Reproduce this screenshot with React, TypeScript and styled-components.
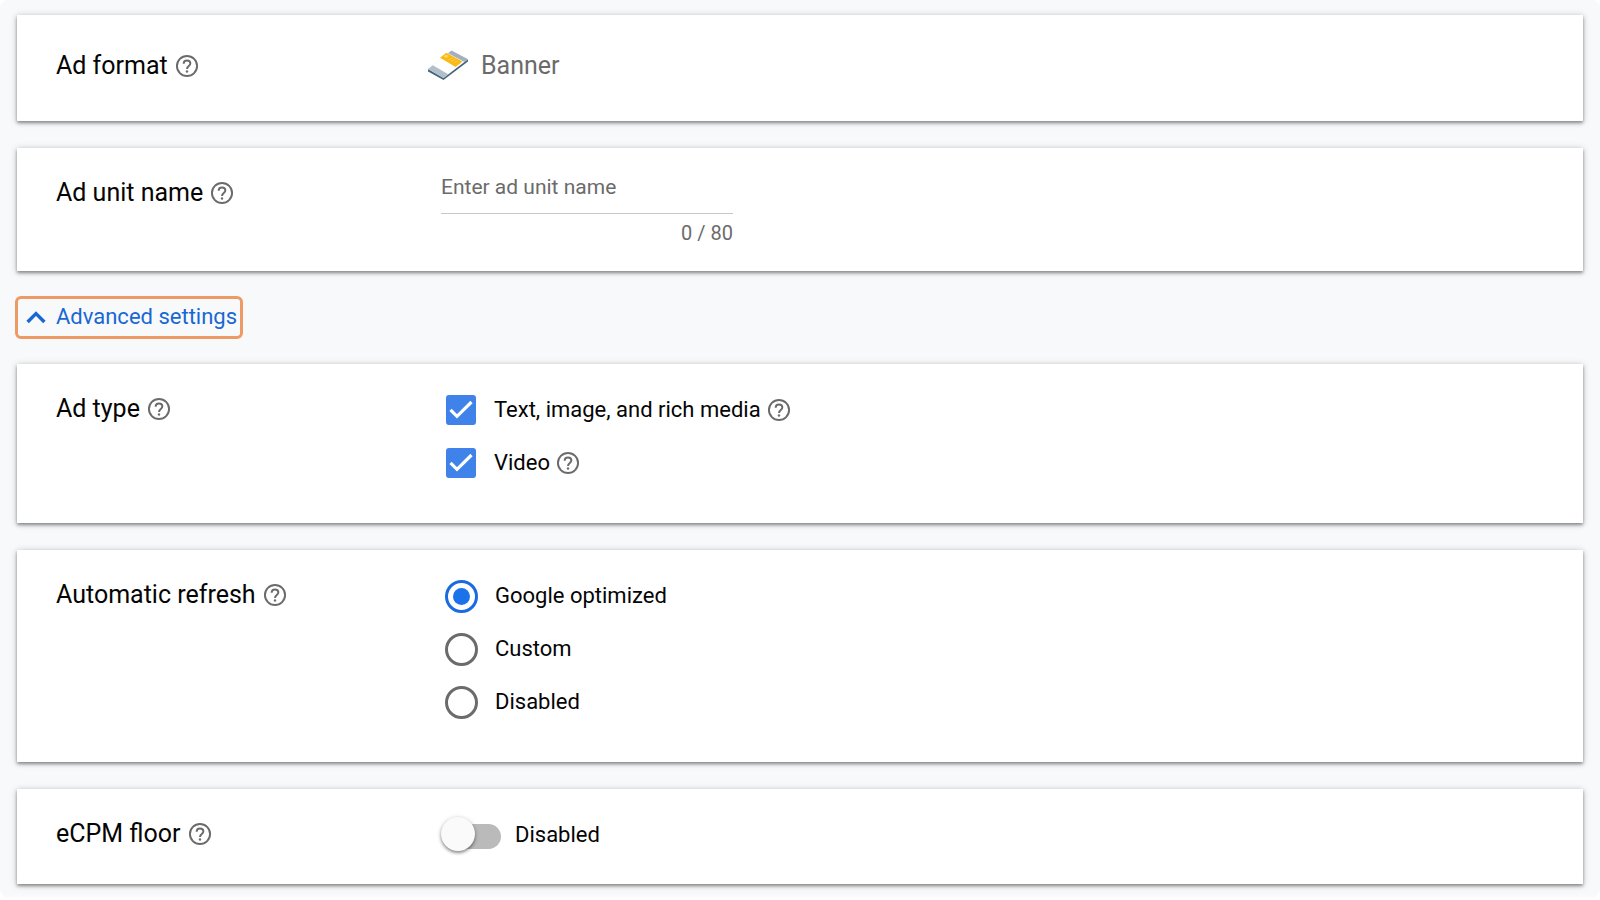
import React, { useState } from "react";
import styled, { createGlobalStyle } from "styled-components";

const GlobalStyle = createGlobalStyle`
  *, *::before, *::after { box-sizing: border-box; }
  body {
    margin: 0;
    background: #fff;
    color: #050505;
    font-family: Roboto, "Liberation Sans", sans-serif;
  }
  button, input { font: inherit; color: inherit; }
`;

const Page = styled.main`
  display: flex;
  flex-direction: column;
  gap: 27px;
  padding: 15px 17px 13px;
  background: #f8f9fb;
  border-radius: 8px;
`;

const Card = styled.section<{ $top?: number; $bottom: number }>`
  display: grid;
  grid-template-columns: 372px 1fr;
  align-items: start;
  padding: ${(p) => p.$top ?? 30}px 39px ${(p) => p.$bottom}px;
  background: #fff;
  box-shadow: 0 2px 3px rgba(0, 0, 0, 0.36), 0 1px 7px rgba(0, 0, 0, 0.22);
`;

const Heading = styled.div`
  display: flex;
  align-items: center;
  gap: 6px;
  height: 30px;
`;

const NameHeading = styled.div`
  padding-top: 6px;
`;

const Title = styled.h2`
  margin: 0;
  font-size: 25px;
  font-weight: 400;
  line-height: 30px;
  white-space: nowrap;
`;

const HelpButton = styled.button`
  display: flex;
  padding: 0;
  border: 0;
  background: none;
  color: #6b6b6b;
  cursor: pointer;
`;

const Format = styled.div`
  display: flex;
  align-items: center;
  gap: 13px;
  height: 30px;
  color: #6b6b6b;
  font-size: 25px;
  line-height: 30px;
`;

const Field = styled.div`
  width: 292px;
  margin-left: 13px;
  color: #6b6b6b;
`;

const TextInput = styled.input`
  display: block;
  width: 100%;
  height: 42px;
  padding: 0 0 11px;
  border: 0;
  border-bottom: 1px solid #c8c8c8;
  border-radius: 0;
  outline: 0;
  background: none;
  font-size: 21px;
  line-height: 30px;
  &::placeholder { color: #6b6b6b; opacity: 1; }
`;

const Counter = styled.div`
  padding-top: 7px;
  font-size: 20px;
  line-height: 24px;
  text-align: right;
`;

const AdvancedButton = styled.button`
  display: flex;
  align-items: center;
  align-self: flex-start;
  gap: 8px;
  height: 43px;
  margin: -2px;
  padding: 0 3px 2px 6px;
  border: 3px solid #ed9a64;
  border-radius: 6px;
  background: none;
  color: #1967d2;
  font-size: 22px;
  line-height: 30px;
  cursor: pointer;
`;

const Options = styled.div`
  display: grid;
  gap: 21px;
  padding-left: 17px;
`;

const Option = styled.div`
  display: flex;
  align-items: center;
  gap: 5px;
  height: 32px;
`;

const OptionLabel = styled.label`
  display: flex;
  align-items: center;
  gap: 17px;
  font-size: 22px;
  line-height: 30px;
  cursor: pointer;
`;

const Control = styled.span`
  display: grid;
  place-items: center;
  width: 32px;
  height: 32px;
  & > * { grid-area: 1 / 1; }
  svg { pointer-events: none; }
`;

const Checkbox = styled.input`
  appearance: none;
  width: 30px;
  height: 30px;
  margin: 0;
  border: 3px solid #6b6b6b;
  border-radius: 3px;
  &:checked { border-color: #3f83ea; background: #3f83ea; }
`;

const Radio = styled.input`
  appearance: none;
  display: grid;
  place-items: center;
  width: 33px;
  height: 33px;
  margin: 0;
  border: 3px solid #6b6b6b;
  border-radius: 50%;
  &:checked { border-color: #1a6be0; }
  &:checked::before {
    content: "";
    width: 17px;
    height: 17px;
    border-radius: 50%;
    background: #1a73e8;
  }
`;

const SwitchLabel = styled.label`
  display: flex;
  align-items: center;
  gap: 14px;
  height: 32px;
  padding-left: 18px;
  font-size: 22px;
  line-height: 30px;
`;

const Switch = styled.input`
  appearance: none;
  width: 55px;
  height: 25px;
  margin: 3px 0 0;
  border-radius: 13px;
  background: #bababa;
  &::before {
    content: "";
    display: block;
    width: 34px;
    height: 34px;
    margin: -7px 0 0 -5px;
    border-radius: 50%;
    background: #fafafa;
    box-shadow: 0 2px 3px rgba(0, 0, 0, 0.34), 0 1px 5px rgba(0, 0, 0, 0.2);
  }
  &:checked { background: #8ab4f8; }
  &:checked::before { margin-left: 26px; background: #1a73e8; }
`;

function Help({ topic }: { topic: string }) {
  return (
    <HelpButton type="button" aria-label={`Help: ${topic}`}>
      <svg width="26" height="26" viewBox="0 0 24 24" fill="none" stroke="currentColor" strokeWidth="1.8">
        <circle cx="12" cy="12" r="9.3" />
        <path d="M8.9 10c0-1.9 1.3-3.1 3.1-3.1s3.1 1.2 3.1 2.8c0 2.2-3.1 2.4-3.1 5" />
        <circle cx="12" cy="17.1" r="1.1" fill="currentColor" stroke="none" />
      </svg>
    </HelpButton>
  );
}

function CardTitle({ children }: { children: string }) {
  return (
    <Heading>
      <Title>{children}</Title>
      <Help topic={children} />
    </Heading>
  );
}

function BannerIcon() {
  return (
    <svg width="40" height="32" viewBox="0 0 40 32" aria-hidden="true">
      <path d="M0 19.5 23.5 1 40 9.5v2L15.5 30 0 21.5z" fill="#45657c" />
      <path d="M0 19 23.5 .5 40 9.3 15.5 28z" fill="#fff" />
      <path d="M0 19l4.8-3.7L20.3 24.3 15.5 28z" fill="#b2bfca" />
      <path d="M20 3.2 23.5 .5 40 9.3 36.5 12z" fill="#a1b0bc" />
      <path d="M12 7.8 18.3 2.8 34.5 11.6 27.6 17z" fill="#fbb916" />
      <path d="M15.5 6.4l2.5-1.8 2.8 1.5-2.5 1.9z" fill="#fdd56a" />
      <path d="M20.5 9.9l4.5-2.4M23 11.5l5-2.6M25.5 13.1l4-2.2" stroke="#fccb48" strokeWidth="1" />
    </svg>
  );
}

function CheckOption({ label }: { label: string }) {
  const [on, setOn] = useState(true);
  return (
    <Option>
      <OptionLabel>
        <Control>
          <Checkbox type="checkbox" checked={on} onChange={() => setOn(!on)} />
          {on && (
            <svg width="30" height="30" viewBox="0 0 30 30" fill="none" stroke="#fff" strokeWidth="3.2">
              <path d="M4.5 14.8 11 21.3 25.5 7" />
            </svg>
          )}
        </Control>
        {label}
      </OptionLabel>
      <Help topic={label} />
    </Option>
  );
}

const refreshModes = ["Google optimized", "Custom", "Disabled"];

export default function App() {
  const [name, setName] = useState("");
  const [open, setOpen] = useState(true);
  const [mode, setMode] = useState(refreshModes[0]);
  const [floor, setFloor] = useState(false);

  return (
    <>
      <GlobalStyle />
      <Page>
        <Card $top={36} $bottom={40}>
          <CardTitle>Ad format</CardTitle>
          <Format>
            <BannerIcon />
            Banner
          </Format>
        </Card>

        <Card $top={24} $bottom={26}>
          <NameHeading>
            <CardTitle>Ad unit name</CardTitle>
          </NameHeading>
          <Field>
            <TextInput
              aria-label="Ad unit name"
              placeholder="Enter ad unit name"
              maxLength={80}
              value={name}
              onChange={(e) => setName(e.target.value)}
            />
            <Counter>{name.length} / 80</Counter>
          </Field>
        </Card>

        <AdvancedButton type="button" aria-expanded={open} onClick={() => setOpen(!open)}>
          <svg width="24" height="24" viewBox="0 0 24 24" fill="none" stroke="currentColor" strokeWidth="3.4">
            <path d={open ? "M3.6 17 12 8.6 20.4 17" : "M3.6 8 12 16.4 20.4 8"} />
          </svg>
          Advanced settings
        </AdvancedButton>

        {open && (
          <>
            <Card $bottom={44}>
              <CardTitle>Ad type</CardTitle>
              <Options role="group" aria-label="Ad type">
                <CheckOption label="Text, image, and rich media" />
                <CheckOption label="Video" />
              </Options>
            </Card>

            <Card $bottom={44}>
              <CardTitle>Automatic refresh</CardTitle>
              <Options role="radiogroup" aria-label="Automatic refresh">
                {refreshModes.map((m) => (
                  <Option key={m}>
                    <OptionLabel>
                      <Radio type="radio" name="refresh" checked={mode === m} onChange={() => setMode(m)} />
                      {m}
                    </OptionLabel>
                  </Option>
                ))}
              </Options>
            </Card>

            <Card $bottom={33}>
              <CardTitle>eCPM floor</CardTitle>
              <SwitchLabel>
                <Switch type="checkbox" role="switch" checked={floor} onChange={() => setFloor(!floor)} />
                {floor ? "Enabled" : "Disabled"}
              </SwitchLabel>
            </Card>
          </>
        )}
      </Page>
    </>
  );
}
